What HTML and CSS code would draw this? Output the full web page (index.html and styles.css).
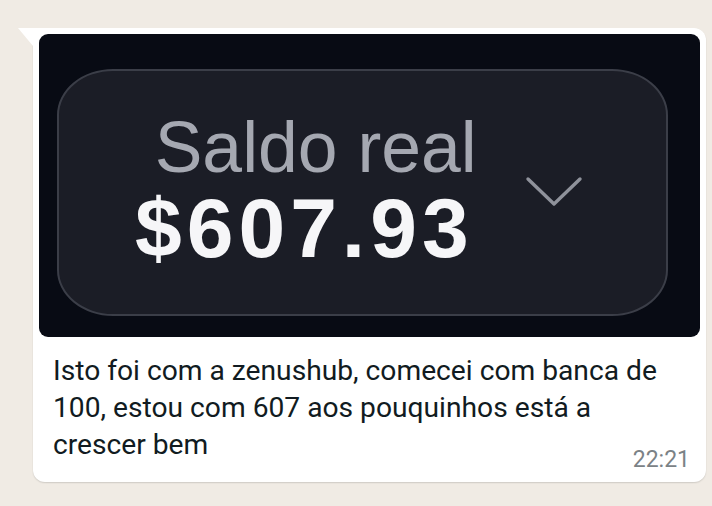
FILE: index.html
```html
<!DOCTYPE html>
<html lang="pt">
<head>
<meta charset="UTF-8">
<meta name="viewport" content="width=device-width, initial-scale=1">
<title>Conversa</title>
<link rel="stylesheet" href="styles.css">
</head>
<body>
<div class="chat">
  <div class="bubble">
    <div class="photo">
      <div class="balance">
        <div class="balance-text">
          <div class="balance-label">Saldo real</div>
          <div class="balance-value">$607.93</div>
        </div>
        <svg class="chevron" width="58" height="34" viewBox="0 0 58 34">
          <path d="M3 4 L29 29 L55 4" fill="none" stroke="#8f929b" stroke-width="3.4" stroke-linecap="round" stroke-linejoin="round"/>
        </svg>
      </div>
    </div>
    <div class="caption">Isto foi com a zenushub, comecei com banca de 100, estou com 607 aos pouquinhos está a crescer bem</div>
    <div class="meta">22:21</div>
  </div>
</div>
</body>
</html>
```

FILE: styles.css
```css
* { box-sizing: border-box; }
html, body { margin: 0; height: 100%; }
body { background: #f0ebe4; font-family: Roboto, "Noto Sans", sans-serif; overflow: hidden; }
.chat { padding: 28px 6px 0 33px; }
.bubble { position: relative; background: #fff; border-radius: 0 12px 12px 12px; padding: 6px 6px 10px 6px; box-shadow: 0 1px 1.5px rgba(0,0,0,0.14); }
.bubble::before { content: ""; position: absolute; left: -15px; top: 0; border-top: 18px solid #fff; border-left: 15px solid transparent; }
.photo { height: 303px; background: #080b14; border-radius: 9px; padding: 35px 32px 21px 18px; }
.balance { height: 100%; display: flex; align-items: center; padding-left: 76px; background: #1b1d26; border: 2px solid #3b3e48; border-radius: 56px / 46px; }
.balance-text { display: flex; flex-direction: column; align-items: flex-end; font-family: "Liberation Sans", Arial, sans-serif; }
.balance-label { font-size: 71.5px; line-height: 70px; color: #a5a8b1; margin-top: -3px; margin-right: -8px; }
.balance-value { font-size: 84px; line-height: 84px; font-weight: bold; color: #f6f6f8; letter-spacing: 5px; margin-right: -5px; margin-top: 4px; }
.chevron { margin-left: 56px; margin-top: -2px; }
.caption { font-size: 28.2px; line-height: 37px; color: #111b21; padding: 15px 28px 0 14px; }
.meta { text-align: right; font-size: 23px; line-height: 24px; color: #7b8286; margin-top: -15px; padding-right: 10px; }
```
